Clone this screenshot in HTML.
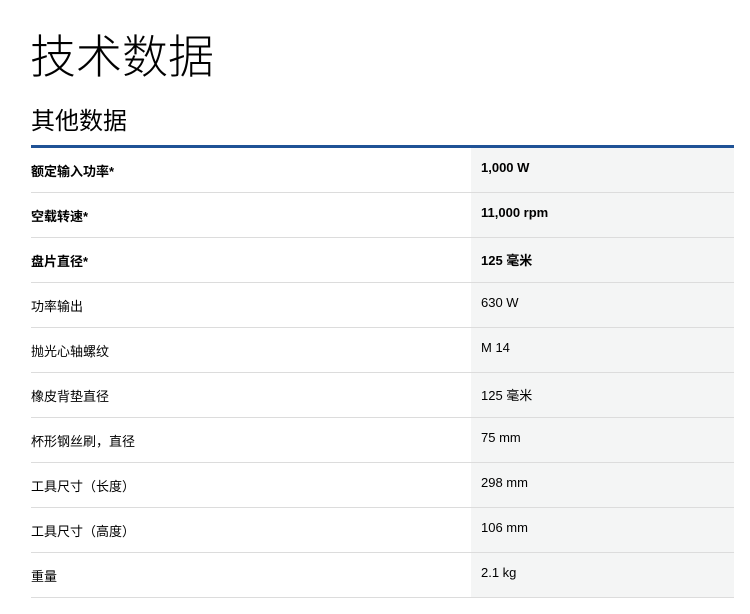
<!DOCTYPE html>
<html><head><meta charset="utf-8"><style>
body{margin:0;background:#fff;width:750px;height:614px;overflow:hidden;font-family:"Liberation Sans","Noto Sans CJK SC",sans-serif;color:#000}
h1{position:absolute;left:30px;top:27px;margin:0;font-weight:300;font-size:46px;line-height:60px}
h2{position:absolute;left:31px;top:106px;margin:0;font-weight:400;font-size:24px;line-height:32px}
.bar{position:absolute;left:31px;top:145px;width:703px;height:3px;background:#1f5296}
.t{position:absolute;left:31px;top:148px;width:703px}
.r{height:44px;border-bottom:1px solid #dcdcdc;position:relative;font-size:13px}
.r .a{position:absolute;left:0;top:13px}
.r .b{position:absolute;left:440px;top:0;width:263px;height:44px;background:#f4f5f5}
.r .b span{position:absolute;left:10px;top:12px}
.bo{font-weight:bold}
</style></head><body>
<h1>技术数据</h1>
<h2>其他数据</h2>
<div class="bar"></div>
<div class="t">
<div class="r bo"><div class="a">额定输入功率*</div><div class="b"><span>1,000 W</span></div></div>
<div class="r bo"><div class="a">空载转速*</div><div class="b"><span>11,000 rpm</span></div></div>
<div class="r bo"><div class="a">盘片直径*</div><div class="b"><span>125 毫米</span></div></div>
<div class="r"><div class="a">功率输出</div><div class="b"><span>630 W</span></div></div>
<div class="r"><div class="a">抛光心轴螺纹</div><div class="b"><span>M 14</span></div></div>
<div class="r"><div class="a">橡皮背垫直径</div><div class="b"><span>125 毫米</span></div></div>
<div class="r"><div class="a">杯形钢丝刷，直径</div><div class="b"><span>75 mm</span></div></div>
<div class="r"><div class="a">工具尺寸（长度）</div><div class="b"><span>298 mm</span></div></div>
<div class="r"><div class="a">工具尺寸（高度）</div><div class="b"><span>106 mm</span></div></div>
<div class="r"><div class="a">重量</div><div class="b"><span>2.1 kg</span></div></div>
</div>
</body></html>
